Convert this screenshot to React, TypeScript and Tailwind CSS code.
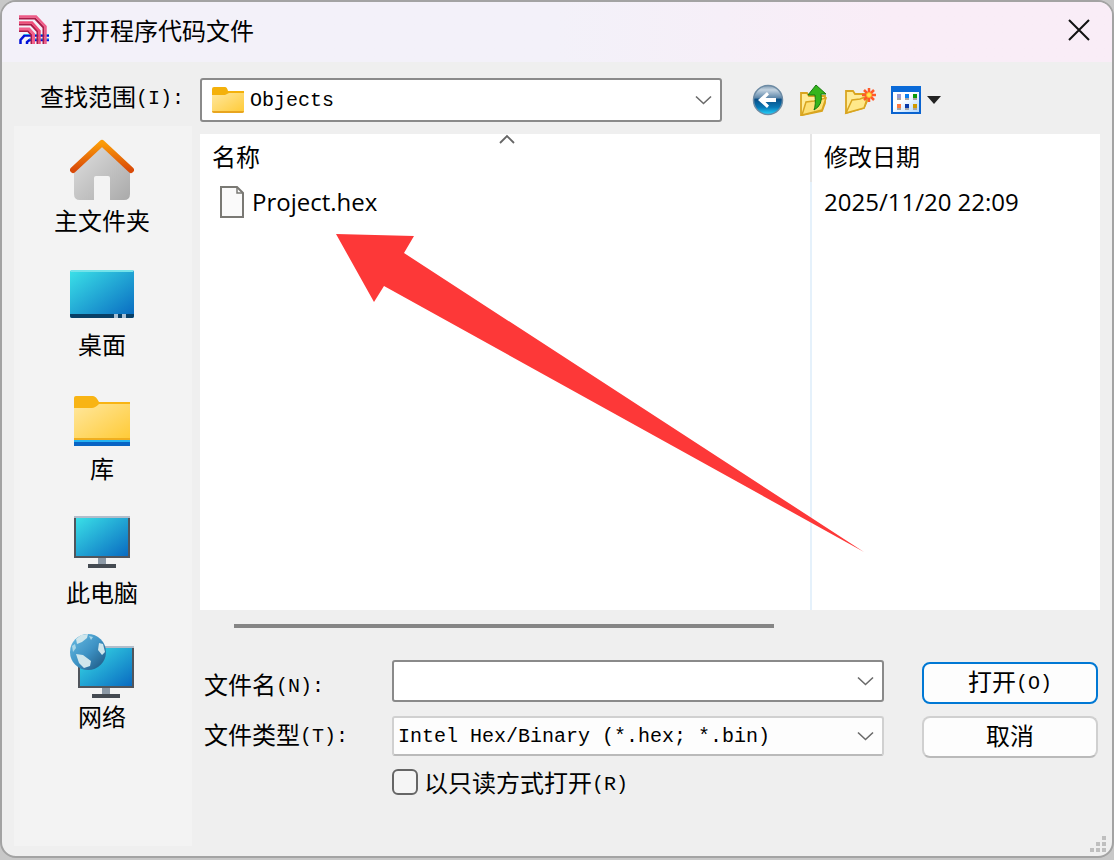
import type { ReactNode } from "react";

function Mono({ children }: { children: ReactNode }) {
  return (
    <span className="align-[2px] font-['Liberation_Mono',monospace] text-xl leading-none">
      {children}
    </span>
  );
}

function AppIcon() {
  return (
    <svg width="32" height="32" viewBox="0 0 32 32" fill="none" aria-hidden="true">
      <path d="M2.500 30v-4l4-4.500H31M9 30v-2l2.500-2H31" stroke="#0010d8" strokeWidth="2.500" />
      <path d="M6 20.500h25M11 25h20" stroke="#22a8e8" />
      <path d="M1 4.500h16l8.500 9V30M1 10.500h12l6.500 7V30M1 17h9l3.500 4v9" stroke="#a81c48" strokeWidth="2" />
      <path d="M1 2.500h17l9.500 10V30" stroke="#ee5c88" strokeWidth="2.500" />
      <path d="M1 8.500h13l7.500 8.500v13" stroke="#ee4c78" strokeWidth="2.500" />
      <path d="M1 15h10l4.500 5v10" stroke="#f2608c" strokeWidth="3" />
    </svg>
  );
}

function FolderIcon() {
  return (
    <svg width="32" height="26" viewBox="0 0 32 26" className="shrink-0" aria-hidden="true">
      <defs>
        <linearGradient id="folder" x1="0" y1="0" x2="1" y2="1">
          <stop offset="0" stopColor="#ffe79d" />
          <stop offset="1" stopColor="#ffca35" />
        </linearGradient>
      </defs>
      <path d="M0 2q0-2 2-2h11q2 0 3 4h16v6H0z" fill="#f4b10b" />
      <path d="M0 8h13l4-2h15v18q0 2-2 2H2q-2 0-2-2z" fill="url(#folder)" />
      <path d="M0 24h32q0 2-2 2H2q-2 0-2-2z" fill="#e8a51f" />
    </svg>
  );
}

function FileIcon() {
  return (
    <svg width="24" height="32" viewBox="0 0 24 32" className="shrink-0" aria-hidden="true">
      <path d="M1 1h16l6 6v24H1z" fill="#fafafa" stroke="#7a7974" strokeWidth="2" />
      <path d="M17 1v6h6" fill="none" stroke="#7a7974" strokeWidth="1.500" />
    </svg>
  );
}

function Chevron() {
  return (
    <svg
      width="18"
      height="10"
      viewBox="0 0 18 10"
      className="pointer-events-none shrink-0"
      aria-hidden="true"
    >
      <path d="M2 1.500l7.500 7L17 1.500" fill="none" stroke="#6a6a6a" strokeWidth="1.600" />
    </svg>
  );
}

function BackIcon() {
  return (
    <svg width="32" height="32" viewBox="0 0 32 32" aria-hidden="true">
      <defs>
        <linearGradient id="back" x1="0" y1="0" x2="0" y2="1">
          <stop offset="0" stopColor="#7f9ab2" />
          <stop offset=".15" stopColor="#c3d3e0" />
          <stop offset=".42" stopColor="#5f88ab" />
          <stop offset=".48" stopColor="#0b4f86" />
          <stop offset=".75" stopColor="#0878b6" />
          <stop offset="1" stopColor="#25d6ff" />
        </linearGradient>
      </defs>
      <circle cx="16" cy="16" r="14.500" fill="url(#back)" stroke="#6d8ba4" strokeWidth="1.500" />
      <path d="M6 16l9-8 2 2.500-3.500 3.500H24v4H13.500l3.500 3.500-2 2.500z" fill="#fff" />
    </svg>
  );
}

function UpIcon() {
  return (
    <svg width="30" height="32" viewBox="0 0 30 32" aria-hidden="true">
      <path d="M2 9h6l2 3h16v7l-3 8-20 4H2z" fill="#ffeb98" stroke="#d9a520" strokeWidth="1.800" />
      <path d="M3 31l4-13 8-1 12-3-4 12z" fill="#fde077" stroke="#d9a520" strokeWidth="1.500" />
      <path d="M15 26q2-5 1-15H9l8-10 10 9h-5q2 11-7 16z" fill="#35b51c" stroke="#16780f" />
    </svg>
  );
}

function NewFolderIcon() {
  return (
    <svg width="32" height="32" viewBox="0 0 32 32" aria-hidden="true">
      <path d="M2 7h7l2 3h12v7l-3 7L2 29z" fill="#ffeb98" stroke="#d9a520" strokeWidth="1.800" />
      <path d="M2 29l6-13 8-1 8-3-4 12z" fill="#ffe88a" stroke="#d9a520" strokeWidth="1.500" />
      <path d="M25 4v14M18 11h14M20 6l10 10M30 6L20 16" stroke="#ff5a2a" strokeWidth="2.500" />
      <circle cx="25" cy="11" r="2.500" fill="#ffe94e" stroke="#ffb02a" />
    </svg>
  );
}

function ViewIcon() {
  return (
    <svg width="50" height="28" viewBox="0 0 50 28" aria-hidden="true">
      <defs>
        <linearGradient id="view" x1=".5" y1=".4" x2="1" y2="1">
          <stop offset="0" stopColor="#fff" />
          <stop offset="1" stopColor="#a9d3ff" />
        </linearGradient>
      </defs>
      <path d="M1 1h28v26H1z" fill="url(#view)" stroke="#0a63cf" strokeWidth="2" />
      <path d="M0 0h30v6H0z" fill="#0a6ad8" />
      <path d="M6 12h4v2H6zM14 12h4v2h-4zM22 12h4v2h-4zM6 22h4v2H6zM14 22h4v2h-4zM22 22h4v2h-4z" fill="#a6a6a6" />
      <path d="M6 8h4v4H6z" fill="#9b9bd0" />
      <path d="M14 8h4v4h-4z" fill="#0a80f0" />
      <path d="M22 8h4v4h-4z" fill="#0a9a0a" />
      <path d="M6 18h4v4H6z" fill="#ff7a3d" />
      <path d="M14 18h4v4h-4z" fill="#0838a8" />
      <path d="M22 18h4v4h-4z" fill="#d09a00" />
      <path d="M36 10h14l-7 8z" fill="#222" />
    </svg>
  );
}

function HomeIcon() {
  return (
    <svg width="64" height="64" viewBox="0 0 64 64" aria-hidden="true">
      <defs>
        <linearGradient id="wall" x1="0" y1="0" x2="1" y2="1">
          <stop offset="0" stopColor="#e0e0e0" />
          <stop offset="1" stopColor="#aaa" />
        </linearGradient>
        <linearGradient id="roof" x1="0" y1="0" x2="0" y2="1">
          <stop offset="0" stopColor="#fb9c08" />
          <stop offset="1" stopColor="#d94a08" />
        </linearGradient>
      </defs>
      <path
        d="M4 30L32 6l28 24v26q0 6-6 6H40V40q0-2-2-2H26q-2 0-2 2v22H10q-6 0-6-6z"
        fill="url(#wall)"
      />
      <path
        d="M3 32L32 5l29 27"
        fill="none"
        stroke="url(#roof)"
        strokeWidth="6"
        strokeLinecap="round"
        strokeLinejoin="round"
      />
    </svg>
  );
}

function ScreenGradient({ id }: { id: string }) {
  return (
    <defs>
      <linearGradient id={id} x1="0" y1="0" x2="1" y2="1">
        <stop offset="0" stopColor="#3be2e8" />
        <stop offset="1" stopColor="#0868c0" />
      </linearGradient>
    </defs>
  );
}

function DesktopIcon() {
  return (
    <svg width="64" height="64" viewBox="0 0 64 64" aria-hidden="true">
      <ScreenGradient id="desktop" />
      <rect y="8" width="64" height="48" rx="2" fill="url(#desktop)" />
      <path d="M1 9h62" stroke="#74e3ea" strokeWidth="2" />
      <path d="M0 52h64v2q0 2-2 2H2q-2 0-2-2z" fill="#083f66" />
      <path d="M44 52h4v4h-4zM52 52h4v4h-4z" fill="#a9c0d4" />
    </svg>
  );
}

function LibraryIcon() {
  return (
    <svg width="64" height="64" viewBox="0 0 64 64" aria-hidden="true">
      <path d="M4 12q0-2 2-2h17q3 0 6 6h31v8H4z" fill="#f8b414" />
      <path d="M4 22h18q3 0 7-4h31v36H4z" fill="url(#folder)" />
      <path d="M4 52h56v2H4z" fill="#efae20" />
      <path d="M4 54h56v3H4z" fill="#25b2f2" />
      <path d="M4 56h56v4H4z" fill="#0864c4" />
    </svg>
  );
}

function ComputerIcon() {
  return (
    <svg width="64" height="64" viewBox="0 0 64 64" aria-hidden="true">
      <ScreenGradient id="computer" />
      <path d="M28 47h8v7h-8z" fill="#8c99a6" />
      <path d="M5 7h54v40H5z" fill="url(#computer)" stroke="#50555c" strokeWidth="2" />
      <path d="M4 6h56v2H4z" fill="#b1bdcb" />
      <path d="M18 54h28v4H18z" fill="#444a51" />
    </svg>
  );
}

function NetworkIcon() {
  return (
    <svg width="64" height="64" viewBox="0 0 64 64" aria-hidden="true">
      <defs>
        <linearGradient id="globe" x1="0" y1="0" x2="1" y2="1">
          <stop offset="0" stopColor="#69bce2" />
          <stop offset=".5" stopColor="#3e93c5" />
          <stop offset="1" stopColor="#1a527c" />
        </linearGradient>
      </defs>
      <ScreenGradient id="network" />
      <path d="M32 53h8v7h-8z" fill="#8c99a6" />
      <path d="M9 13h54v40H9z" fill="url(#network)" stroke="#50555c" strokeWidth="2" />
      <path d="M8 12h56v2H8z" fill="#b1bdcb" />
      <path d="M22 60h28v4H22z" fill="#444a51" />
      <circle cx="18" cy="18" r="18" fill="url(#globe)" />
      <path d="M6 5l5-4 7-1-1 4-5 4-5 2zM6 20l7 1 8 6-1 5-6 2-5-5zM29 9l4 1 2 8-3 3-4-5z" fill="#cfe6ec" />
      <path d="M2 12l3-2 1 4-3 4zM19 2l4 1-2 3z" fill="#a7d6e8" />
    </svg>
  );
}

const places = [
  { name: "主文件夹", icon: <HomeIcon /> },
  { name: "桌面", icon: <DesktopIcon /> },
  { name: "库", icon: <LibraryIcon /> },
  { name: "此电脑", icon: <ComputerIcon /> },
  { name: "网络", icon: <NetworkIcon /> },
];

const files = [{ name: "Project.hex", modified: "2025/11/20 22:09" }];

function TitleBar() {
  return (
    <header className="flex h-[60px] shrink-0 items-center bg-linear-to-r from-[#f3f1f9] from-50% to-[#f9edf7] to-80% pr-[18px] pb-1 pl-4">
      <AppIcon />
      <h1 className="ml-3 flex-1 leading-8">打开程序代码文件</h1>
      <button type="button" aria-label="关闭" className="p-1">
        <svg width="22" height="22" viewBox="0 0 22 22" aria-hidden="true">
          <path d="M1 1l20 20M21 1L1 21" stroke="#111" strokeWidth="2" />
        </svg>
      </button>
    </header>
  );
}

function LocationBar() {
  return (
    <div className="flex shrink-0 pt-4 pb-1 pl-[38px]">
      <label htmlFor="look-in" className="w-40 shrink-0 pt-0.5 leading-8">
        查找范围<Mono>(I):</Mono>
      </label>
      <div className="flex h-11 min-w-0 flex-1 items-center rounded-[3px] border-2 border-[#8a8a8a] bg-white pr-2 pl-2.5">
        <FolderIcon />
        <select
          id="look-in"
          className="ml-1.5 min-w-0 flex-1 appearance-none bg-transparent pt-0.5 font-['Liberation_Mono',monospace] text-xl outline-none"
        >
          <option>Objects</option>
        </select>
        <Chevron />
      </div>
      <div className="flex h-11 w-[390px] shrink-0 items-center gap-[15px] pl-[30px]">
        <button type="button" aria-label="后退">
          <BackIcon />
        </button>
        <button type="button" aria-label="向上一级">
          <UpIcon />
        </button>
        <button type="button" aria-label="新建文件夹">
          <NewFolderIcon />
        </button>
        <button type="button" aria-label="查看">
          <ViewIcon />
        </button>
      </div>
    </div>
  );
}

function FileList() {
  return (
    <div className="relative grid flex-1 overflow-hidden bg-white">
      <table className="h-full w-full table-fixed border-collapse text-left">
        <thead>
          <tr className="h-12">
            <th
              className="border-r-2 border-[#e5e5e5] p-0 pb-1 pl-3 leading-8 font-normal"
              aria-sort="ascending"
            >
              名称
            </th>
            <th className="w-[289px] p-0 pb-1 pl-3 leading-8 font-normal">修改日期</th>
          </tr>
        </thead>
        <tbody>
          {files.map((file) => (
            <tr key={file.name} className="h-11">
              <td className="border-r-2 border-[#e5f1fb] p-0 pb-1 pl-5">
                <div className="flex items-center gap-2">
                  <FileIcon />
                  <span className="font-['Open_Sans',sans-serif] leading-8">{file.name}</span>
                </div>
              </td>
              <td className="p-0 pb-1 pl-3 font-['Open_Sans',sans-serif] leading-8">
                {file.modified}
              </td>
            </tr>
          ))}
          <tr>
            <td className="border-r-2 border-[#e5f1fb]" />
            <td />
          </tr>
        </tbody>
      </table>
      <svg
        width="16"
        height="10"
        viewBox="0 0 16 10"
        className="absolute top-0 left-[299px]"
        aria-hidden="true"
      >
        <path d="M1 9l7-7 7 7" fill="none" stroke="#666" strokeWidth="1.800" />
      </svg>
      <svg
        width="528"
        height="318"
        viewBox="0 0 528 318"
        className="pointer-events-none absolute top-[100px] left-[136px]"
        aria-hidden="true"
      >
        <path d="M0 0l78 2-10 17 460 299L48 52 38 68z" fill="#fd3838" />
      </svg>
    </div>
  );
}

function FileForm() {
  return (
    <form className="mt-8 grid grid-cols-[192px_1fr_176px] gap-y-3 pr-0.5 pb-12">
      <label htmlFor="file-name" className="pt-2 pl-1 leading-8">
        文件名<Mono>(N):</Mono>
      </label>
      <div className="mr-[38px] flex h-[42px] items-center rounded-[3px] border-2 border-[#8a8a8a] bg-white pr-2">
        <input
          id="file-name"
          type="text"
          className="min-w-0 flex-1 bg-transparent px-1.5 font-['Liberation_Mono',monospace] text-xl outline-none"
        />
        <Chevron />
      </div>
      <button
        type="button"
        className="mt-0.5 h-[42px] rounded-lg border-2 border-[#0078d4] bg-[#fdfdfd] pb-1 leading-8"
      >
        打开<Mono>(O)</Mono>
      </button>

      <label htmlFor="file-type" className="pt-0.5 pl-1 leading-8">
        文件类型<Mono>(T):</Mono>
      </label>
      <div className="mr-[38px] flex h-10 items-center rounded-[3px] border-2 border-[#d0d0d0] border-b-[#bababa] bg-[#fdfdfd] pr-2">
        <select
          id="file-type"
          className="min-w-0 flex-1 appearance-none bg-transparent pt-0.5 pl-1 font-['Liberation_Mono',monospace] text-xl outline-none"
        >
          <option>Intel Hex/Binary (*.hex; *.bin)</option>
        </select>
        <Chevron />
      </div>
      <button
        type="button"
        className="h-[42px] rounded-lg border-2 border-[#d0d0d0] border-b-[#bababa] bg-[#fdfdfd] pb-1 leading-8"
      >
        取消
      </button>

      <label className="col-start-2 -mt-1 flex items-center gap-1.5 leading-8">
        <input
          type="checkbox"
          className="size-[26px] shrink-0 appearance-none rounded-md border-2 border-[#666] bg-[#f5f5f5] checked:bg-[#0078d4]"
        />
        <span>
          以只读方式打开<Mono>(R)</Mono>
        </span>
      </label>
    </form>
  );
}

export default function App() {
  return (
    <div className="flex min-h-screen flex-col bg-[#c8c8c8] pb-0.5 font-['Noto_Sans_CJK_SC',sans-serif] text-2xl text-black">
      <div className="relative flex flex-1 flex-col overflow-hidden rounded-2xl border-2 border-[#a3a3a3] bg-[#efefef]">
        <TitleBar />
        <LocationBar />
        <div className="flex flex-1 px-3 pb-2.5">
          <nav className="flex w-[178px] shrink-0 flex-col items-center gap-[26px] bg-[#f3f3f3] pt-3 pr-0.5">
            {places.map((place) => (
              <button
                key={place.name}
                type="button"
                className="flex flex-col items-center gap-0.5 leading-8"
              >
                {place.icon}
                {place.name}
              </button>
            ))}
          </nav>
          <main className="flex min-w-0 flex-1 flex-col pt-2 pl-2">
            <FileList />
            <div className="mt-3.5 ml-[34px] h-1 w-3/5 bg-[#858585]" />
            <FileForm />
          </main>
        </div>
        <svg
          width="16"
          height="16"
          viewBox="0 0 16 16"
          className="absolute right-1.5 bottom-1"
          aria-hidden="true"
        >
          <path
            d="M12 0h4v4h-4zM6 6h4v4H6zM12 6h4v4h-4zM0 12h4v4H0zM6 12h4v4H6zM12 12h4v4h-4z"
            fill="#bfbfbf"
          />
        </svg>
      </div>
    </div>
  );
}
